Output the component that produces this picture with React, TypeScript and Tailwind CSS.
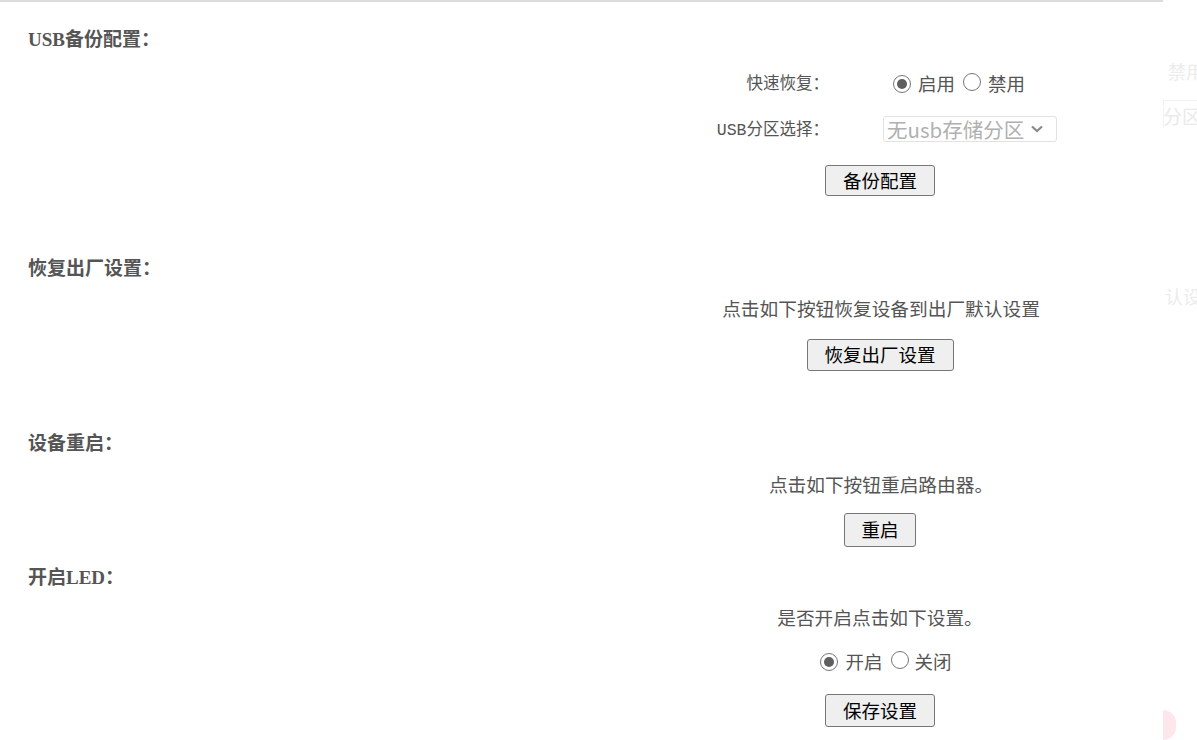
import React from 'react';

const sans = "font-['Noto_Sans_CJK_SC','Noto_Sans',sans-serif]";

const Heading = ({ children, className = '' }: { children: React.ReactNode; className?: string }) => (
  <div
    className={`pl-[28px] h-[20px] leading-[20px] text-[19px] font-bold text-[#555] font-['Liberation_Serif','Noto_Sans_CJK_SC',serif] ${className}`}
  >
    {children}
  </div>
);

const Radio = ({ checked }: { checked?: boolean }) => (
  <span className="inline-flex items-center justify-center w-[18px] h-[18px] rounded-full border border-[#767676] bg-white">
    {checked && <span className="w-[10px] h-[10px] rounded-full bg-[#5f5f5f]" />}
  </span>
);

const Button = ({ children, w, h, className = '' }: { children: React.ReactNode; w: string; h: string; className?: string }) => (
  <button
    className={`${w} ${h} ${className} ${sans} text-[18.5px] text-black bg-[#efefef] border border-[#767676] rounded-[3px] flex items-center justify-center`}
  >
    {children}
  </button>
);

// right column: starts at x=597, ends at 1163, centred content
const Right = ({ children, className = '' }: { children: React.ReactNode; className?: string }) => (
  <div className={`ml-[597px] w-[566px] flex justify-center ${className}`}>{children}</div>
);

export default function App() {
  return (
    <div className="relative w-[1197px] h-[740px] bg-white overflow-hidden">
      <div className="w-[1163px] border-t-2 border-[#dcdcdc]">
        {/* USB备份配置 */}
        <Heading className="mt-[28px]">USB备份配置：</Heading>
        <div className="mt-[19px] h-[30px] flex items-center">
          <div className="w-[829px] pt-[3px] text-right text-[16.5px] text-[#555] font-['Liberation_Mono','Noto_Sans_CJK_SC',monospace]">
            快速恢复：
          </div>
          <div className={`ml-[64px] flex items-center text-[18.5px] text-[#555] ${sans}`}>
            <Radio checked />
            <span className="ml-[7px]">启用</span>
            <span className="ml-[8px]"><Radio /></span>
            <span className="ml-[7px]">禁用</span>
          </div>
        </div>
        <div className="mt-[17px] h-[26px] flex items-center">
          <div className="w-[829px] pt-[5px] text-right text-[16.5px] text-[#555] font-['Liberation_Mono','Noto_Sans_CJK_SC',monospace]">
            USB分区选择：
          </div>
          <div
            className={`ml-[54px] w-[174px] h-[26px] border border-[#e2e2e2] rounded-[3px] flex items-center pl-[3px] text-[20.5px] leading-none text-[#b0b0b0] ${sans}`}
          >
            <span className="whitespace-nowrap">无usb存储分区</span>
            <svg className="ml-[6px]" width="14" height="10" viewBox="0 0 14 10">
              <path d="M2 2.5l5 4.5 5-4.5" fill="none" stroke="#8a8a8a" strokeWidth="2.2" />
            </svg>
          </div>
        </div>
        <Right className="mt-[23px]">
          <Button w="w-[110px]" h="h-[31px]">备份配置</Button>
        </Right>

        {/* 恢复出厂设置 */}
        <Heading className="mt-[63px]">恢复出厂设置：</Heading>
        <Right className={`mt-[17px] h-[24px] items-center text-[18.7px] text-[#555] ${sans}`}>
          <span className="ml-[2px] whitespace-nowrap">点击如下按钮恢复设备到出厂默认设置</span>
        </Right>
        <Right className="mt-[19px]">
          <Button w="w-[147px]" h="h-[32px]">恢复出厂设置</Button>
        </Right>

        {/* 设备重启 */}
        <Heading className="mt-[63px]">设备重启：</Heading>
        <Right className={`mt-[18px] h-[24px] items-center text-[18.7px] text-[#555] ${sans}`}>
          <span className="ml-[2px] whitespace-nowrap">点击如下按钮重启路由器。</span>
        </Right>
        <Right className="mt-[17px]">
          <Button w="w-[72px]" h="h-[34px]">重启</Button>
        </Right>

        {/* 开启LED */}
        <Heading className="mt-[21px]">开启LED：</Heading>
        <Right className={`mt-[17px] h-[24px] items-center text-[18.7px] text-[#555] ${sans}`}>
          <span className="whitespace-nowrap">是否开启点击如下设置。</span>
        </Right>
        <Right className={`mt-[21px] h-[24px] items-center text-[18.5px] text-[#555] ${sans}`}>
          <div className="flex items-center ml-[12px]">
            <Radio checked />
            <span className="ml-[7px]">开启</span>
            <span className="ml-[8px]"><Radio /></span>
            <span className="ml-[6px]">关闭</span>
          </div>
        </Right>
        <Right className="mt-[20px]">
          <Button w="w-[110px]" h="h-[33px]">保存设置</Button>
        </Right>
      </div>

      {/* faint ghost copy at the right edge */}
      <div className={`absolute left-[1168px] top-[58px] whitespace-nowrap text-[18px] text-[#ececec] ${sans}`}>禁用</div>
      <div className="absolute left-[1163px] top-[100px] w-[40px] h-[28px] border-t border-l border-[#f2f2f2]" />
      <div className={`absolute left-[1163px] top-[102px] whitespace-nowrap text-[19px] text-[#eaeaea] ${sans}`}>分区</div>
      <div className={`absolute left-[1165px] top-[283px] whitespace-nowrap text-[18px] text-[#ececec] ${sans}`}>认设</div>
      <div className="absolute left-[1163px] top-[710px] w-[13px] h-[30px] rounded-r-full bg-[#fde6ec]" />
    </div>
  );
}
